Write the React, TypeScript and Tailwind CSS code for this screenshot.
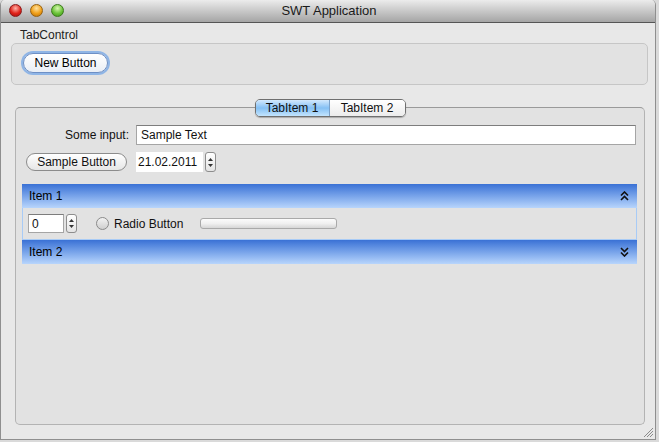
import React from "react";

function Stepper({h = "h-[19px]"}: {h?: string}) {
    return (
        <div className={`w-[11px] ${h} rounded-[3px] border border-[#8d8d8d] bg-gradient-to-b from-white to-[#e4e4e4] flex flex-col items-center justify-center gap-[3px]`}>
            <svg width="5" height="3" viewBox="0 0 5 3"><path d="M2.5 0L5 3H0z" fill="#333"/></svg>
            <svg width="5" height="3" viewBox="0 0 5 3"><path d="M0 0h5L2.5 3z" fill="#333"/></svg>
        </div>
    );
}

function Chevrons({up}: {up: boolean}) {
    return (
        <svg width="9" height="10" viewBox="0 0 9 10" className={up ? "" : "rotate-180"}>
            <path d="M1 4.5L4.5 1L8 4.5M1 9L4.5 5.5L8 9" fill="none" stroke="#111" strokeWidth="1.6"/>
        </svg>
    );
}

function ItemHeader({label, up}: {label: string; up: boolean}) {
    return (
        <div className="h-[24px] flex items-center justify-between pl-[7px] pr-[8px] bg-gradient-to-b from-[#3a71d5] to-[#b8d5fc] text-black">
            <span>{label}</span>
            <Chevrons up={up}/>
        </div>
    );
}

export default function App() {
    return (
        <div className="w-[659px] h-[442px] bg-[#dadada] overflow-hidden text-[12px] text-[#111]"
             style={{fontFamily: '"Liberation Sans", Arial, sans-serif'}}>
            <div className="w-[656px] h-[440px] flex flex-col rounded-t-[5px] border-l border-r border-b border-[#8f8f8f] bg-[#e8e8e8] overflow-hidden">

                {/* Title bar */}
                <div className="relative h-[23px] shrink-0 flex items-center justify-center border-b border-[#555] bg-gradient-to-b from-[#ececec] to-[#a5a5a5]">
                    <div className="absolute left-[8px] top-[4px] flex gap-[8px]">
                        <span className="w-[13px] h-[13px] rounded-full border border-[#8a1a1a] bg-[radial-gradient(circle_at_50%_30%,#ffb3a8,#e0241b_55%,#a50d0d)]"/>
                        <span className="w-[13px] h-[13px] rounded-full border border-[#97610f] bg-[radial-gradient(circle_at_50%_30%,#ffe2a0,#f0a019_55%,#b86a06)]"/>
                        <span className="w-[13px] h-[13px] rounded-full border border-[#3c7a1c] bg-[radial-gradient(circle_at_50%_30%,#d8f7b0,#6cc43a_55%,#3b8d18)]"/>
                    </div>
                    <span className="text-[13px] text-[#1a1a1a] ml-[2px]">SWT Application</span>
                </div>

                {/* TabControl group */}
                <div className="pl-[19px] pt-[5px] leading-[14px] text-[#222]">TabControl</div>
                <div className="ml-[10px] mt-[1px] w-[637px] h-[42px] rounded-[5px] border border-[#c6c6c6] bg-[#e2e2e2] pl-[11px] pt-[9px]">
                    <button className="w-[85px] h-[20px] rounded-full border border-[#6d8fc5] bg-gradient-to-b from-white to-[#e9eef6] shadow-[0_0_0_2px_#8fb5e6] text-[12px] text-black leading-none">
                        New Button
                    </button>
                </div>

                {/* Tab folder */}
                <div className="ml-[14px] mt-[14px] w-[630px] flex flex-col">
                    <div className="flex justify-center h-[18px] -mb-[10px] relative z-10">
                        <div className="flex h-[18px] rounded-[5px] border border-[#6f6f6f] overflow-hidden shadow-[0_1px_1px_rgba(0,0,0,0.25)]">
                            <div className="w-[74px] flex items-center justify-center bg-gradient-to-b from-[#d3e9fd] via-[#84c0f4] to-[#c3e4fd] border-r border-[#7aa0c8]">TabItem 1</div>
                            <div className="w-[75px] flex items-center justify-center bg-gradient-to-b from-white to-[#ececec]">TabItem 2</div>
                        </div>
                    </div>
                    <div className="h-[318px] rounded-[5px] border border-[#b3b3b3] border-t-[#9a9a9a] bg-[#e2e2e2] pt-[17px] px-[6px]">
                        <div className="flex items-center h-[19px]">
                            <span className="w-[114px] text-right pr-[7px]">Some input:</span>
                            <div className="w-[500px] h-[20px] bg-white border border-[#a5a5a5] border-t-[#7d7d7d] pl-[4px] flex items-center">Sample Text</div>
                        </div>
                        <div className="flex items-center h-[20px] mt-[8px]">
                            <button className="ml-[4px] w-[101px] h-[18px] rounded-full border border-[#8c8c8c] bg-gradient-to-b from-white to-[#e6e6e6] text-[12px] leading-none">Sample Button</button>
                            <div className="ml-[9px] w-[67px] h-[20px] bg-white flex items-center pl-[2px]">21.02.2011</div>
                            <div className="ml-[2px]"><Stepper h="h-[20px]"/></div>
                        </div>

                        {/* Expand bar */}
                        <div className="mt-[12px] w-[615px]">
                            <ItemHeader label="Item 1" up={true}/>
                            <div className="h-[32px] border border-t-0 border-[#a8cbf6] bg-[#e2e2e2] flex items-center pl-[5px]">
                                <div className="w-[36px] h-[19px] bg-white border border-[#a5a5a5] border-t-[#7d7d7d] pl-[3px] flex items-center">0</div>
                                <div className="ml-[2px]"><Stepper/></div>
                                <span className="ml-[19px] w-[13px] h-[13px] rounded-full border border-[#8a8a8a] bg-gradient-to-b from-[#f2f2f2] to-[#cfcfcf]"/>
                                <span className="ml-[5px]">Radio Button</span>
                                <div className="ml-[17px] w-[137px] h-[11px] rounded-[3px] border border-[#a9a9a9] bg-gradient-to-b from-[#fbfbfb] via-[#f0f0f0] to-[#d6d6d6]"/>
                            </div>
                            <ItemHeader label="Item 2" up={false}/>
                        </div>
                    </div>
                </div>

                {/* Resize grip */}
                <div className="flex-1 flex justify-end items-end pr-[1px] pb-[1px]">
                    <svg width="11" height="11" viewBox="0 0 11 11">
                        <path d="M1 10L10 1M4 10L10 4M7 10L10 7" stroke="#8a8a8a" strokeWidth="1"/>
                    </svg>
                </div>
            </div>
        </div>
    );
}
